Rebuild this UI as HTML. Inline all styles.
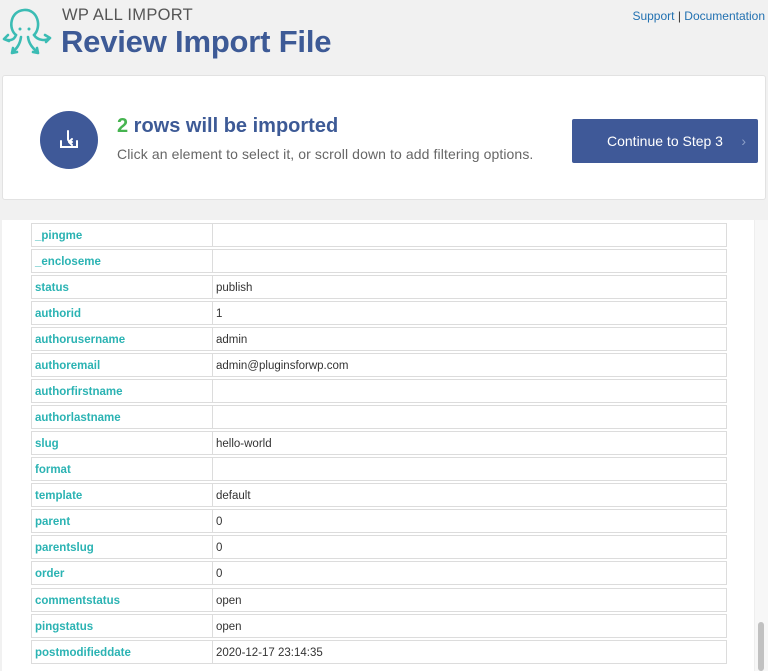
<!DOCTYPE html>
<html><head><style>
*{margin:0;padding:0;box-sizing:border-box}
body{width:768px;height:671px;overflow:hidden;background:#f1f1f1;font-family:"Liberation Sans",sans-serif;position:relative}
.top{position:absolute;left:62px;top:6px;font-size:16.5px;color:#555;letter-spacing:.3px}
.title{position:absolute;left:61px;top:24px;font-size:31px;font-weight:bold;color:#3d5a96;letter-spacing:-.2px}
.links{position:absolute;right:3px;top:9px;font-size:12px;color:#333}
.links a{color:#2271b1;text-decoration:none}
.card{position:absolute;left:2px;top:75px;width:764px;height:125px;background:#fff;border:1px solid #e2e2e2;border-radius:3px}
.circ{position:absolute;left:40px;top:111px;width:58px;height:58px;border-radius:50%;background:#3f5998}
.h{position:absolute;left:117px;top:115px;font-size:20px;font-weight:bold;color:#3d5a96}
.h b{color:#46b450}
.sub{position:absolute;left:117px;top:146px;font-size:14px;color:#666;letter-spacing:.1px}
.btn{position:absolute;left:572px;top:119px;width:186px;height:44px;background:#3f5998;border-radius:2px;color:#fff;font-size:14px;line-height:44px;padding-left:35px}
.btn span{position:absolute;right:12px;color:#8da0c8}
.panel{position:absolute;left:2px;top:220px;width:752px;height:451px;background:#fff}
.row{position:absolute;left:31px;width:696px;height:24px;border:1px solid #dcdcdc;font-size:11.5px;line-height:24px}
.k{position:absolute;left:3px;top:0;color:#2bb3b3;font-weight:bold}
.v{position:absolute;left:180px;top:0;height:22px;line-height:24px;border-left:1px solid #dcdcdc;padding-left:3px;color:#333;width:514px}
.sb{position:absolute;left:754px;top:220px;width:14px;height:451px;background:#f7f7f7;border-left:1px solid #eee}
.th{position:absolute;left:758px;top:622px;width:6px;height:49px;background:#c1c1c1;border-radius:3px}
</style></head><body>
<svg style="position:absolute;left:2px;top:5px" width="52" height="54" viewBox="0 0 52 54" fill="none" stroke="#3bbcb4" stroke-width="2.6" stroke-linecap="round">
<path d="M14 30 C6 24 8 6 22 5 C36 4 40 22 32 30"/>
<circle cx="18" cy="24" r="1.5" fill="#3bbcb4" stroke="none"/><circle cx="27" cy="24" r="1.5" fill="#3bbcb4" stroke="none"/>
<path d="M14 30 C12 36 6 36 2 34 M2 34 l4-4 M2 34 l5 2"/>
<path d="M32 30 C36 36 44 36 48 33 M48 33 l-5-3 M48 33 l-4 4"/>
<path d="M19 32 C18 40 14 44 10 48 M10 48 l1-5 M10 48 l5-1"/>
<path d="M26 32 C27 40 32 44 36 48 M36 48 l-1-5 M36 48 l-5-1"/>
</svg>
<div class="top">WP ALL IMPORT</div>
<div class="title">Review Import File</div>
<div class="links"><a>Support</a> | <a>Documentation</a></div>
<div class="card"></div>
<div class="circ"><svg width="58" height="58" viewBox="0 0 58 58" fill="none" stroke="#fff" stroke-width="2" stroke-linecap="round"><path d="M28 20 v8 c0 2 2 3 4 3 M29 31 l3-3 M29 31 l3 3"/><path d="M21 30 v6 h16 v-6"/></svg></div>
<div class="h"><b>2</b> rows will be imported</div>
<div class="sub">Click an element to select it, or scroll down to add filtering options.</div>
<div class="btn">Continue to Step 3<span>›</span></div>
<div class="panel"></div>
<div class="row" style="top:223px"><span class="k">_pingme</span><span class="v"></span></div>
<div class="row" style="top:249px"><span class="k">_encloseme</span><span class="v"></span></div>
<div class="row" style="top:275px"><span class="k">status</span><span class="v">publish</span></div>
<div class="row" style="top:301px"><span class="k">authorid</span><span class="v">1</span></div>
<div class="row" style="top:327px"><span class="k">authorusername</span><span class="v">admin</span></div>
<div class="row" style="top:353px"><span class="k">authoremail</span><span class="v">admin@pluginsforwp.com</span></div>
<div class="row" style="top:379px"><span class="k">authorfirstname</span><span class="v"></span></div>
<div class="row" style="top:405px"><span class="k">authorlastname</span><span class="v"></span></div>
<div class="row" style="top:431px"><span class="k">slug</span><span class="v">hello-world</span></div>
<div class="row" style="top:457px"><span class="k">format</span><span class="v"></span></div>
<div class="row" style="top:483px"><span class="k">template</span><span class="v">default</span></div>
<div class="row" style="top:509px"><span class="k">parent</span><span class="v">0</span></div>
<div class="row" style="top:535px"><span class="k">parentslug</span><span class="v">0</span></div>
<div class="row" style="top:561px"><span class="k">order</span><span class="v">0</span></div>
<div class="row" style="top:588px"><span class="k">commentstatus</span><span class="v">open</span></div>
<div class="row" style="top:614px"><span class="k">pingstatus</span><span class="v">open</span></div>
<div class="row" style="top:640px"><span class="k">postmodifieddate</span><span class="v">2020-12-17 23:14:35</span></div>
<div class="sb"></div><div class="th"></div>
</body></html>
